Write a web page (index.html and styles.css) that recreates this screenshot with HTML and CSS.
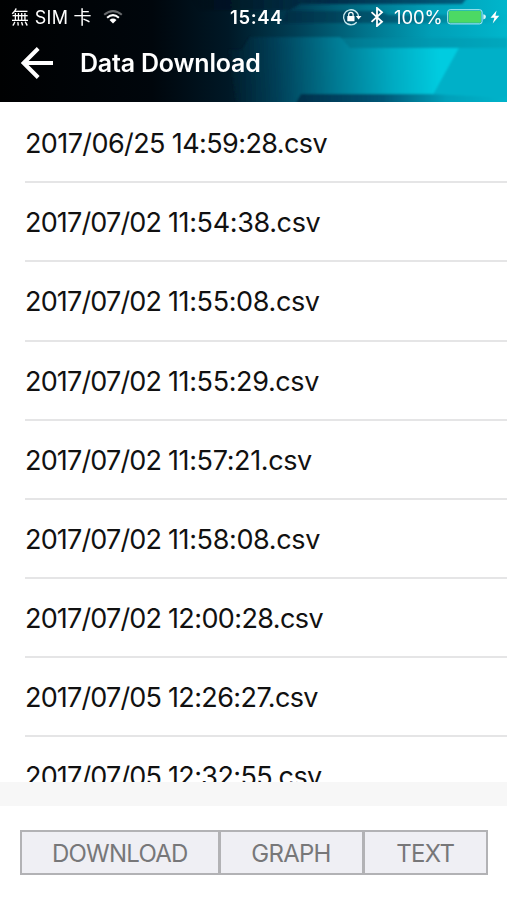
FILE: index.html
```
<!DOCTYPE html>
<html lang="en">
<head>
<meta charset="utf-8">
<title>Data Download</title>
<link rel="stylesheet" href="styles.css">
</head>
<body>
<div class="screen">
  <header class="header">
    <svg class="header-art" viewBox="0 0 507 102" preserveAspectRatio="none" aria-hidden="true">
      <defs>
        <linearGradient id="base"><stop offset="0" stop-color="#000102"/><stop offset=".3" stop-color="#00060c"/><stop offset=".45" stop-color="#001826"/><stop offset=".58" stop-color="#003e54"/><stop offset=".72" stop-color="#00738b"/><stop offset=".85" stop-color="#009fb7"/><stop offset="1" stop-color="#00b6cc"/></linearGradient>
        <linearGradient id="panel" gradientUnits="userSpaceOnUse" x1="205" y1="90" x2="440" y2="80"><stop offset="0" stop-color="#000b14"/><stop offset=".3" stop-color="#003e56"/><stop offset=".55" stop-color="#007891"/><stop offset=".8" stop-color="#00abc2"/><stop offset="1" stop-color="#00cce0"/></linearGradient>
        <linearGradient id="top"><stop offset="0" stop-color="#00080f" stop-opacity="0"/><stop offset=".5" stop-color="#002c48"/><stop offset="1" stop-color="#006080"/></linearGradient>
        <linearGradient id="band"><stop offset="0" stop-color="#00283f"/><stop offset=".5" stop-color="#00506b"/><stop offset="1" stop-color="#00879f" stop-opacity="0"/></linearGradient>
        <linearGradient id="foot"><stop offset="0" stop-color="#002e49"/><stop offset=".4" stop-color="#005575"/><stop offset=".7" stop-color="#00a0b9"/><stop offset="1" stop-color="#00b5cc"/></linearGradient>
        <filter id="soft" x="-5%" y="-10%" width="110%" height="120%"><feGaussianBlur stdDeviation=".8"/></filter>
      </defs>
      <rect width="507" height="102" fill="url(#base)"/>
      <g filter="url(#soft)">
        <path d="M190-3H468L462 4H300L290 10H200Z" fill="url(#top)"/>
        <path d="M286 11H380L388 15H507V23H282Z" fill="url(#band)" opacity=".75"/>
        <path d="M250 37H340L350 48H459L427 106H237L229 50H242Z" fill="url(#panel)"/>
        <path d="M340 38H507V48H350Z" fill="#0093ab" opacity=".4"/>
        <path d="M459 48H512V106H427Z" fill="#00b0c8"/>
        <path d="M301 94H430L512 98V106H294Z" fill="url(#foot)"/>
      </g>
    </svg>
    <div class="status">
      <div class="carrier">無 SIM 卡</div>
      <svg class="wifi" viewBox="0 0 20 16"><g fill="none" stroke="#fff" stroke-width="2.1"><path d="M1.2 5.8Q10-1.5 18.8 5.8" opacity=".4"/><path d="M4.1 8.7Q10 3.6 15.9 8.7"/></g><path d="M6.5 11Q10 8.2 13.5 11L10 14.6Z" fill="#fff"/></svg>
      <div class="clock">15:44</div>
      <svg class="lock" viewBox="0 0 20 18"><path d="M14.7 14.2A7.5 7.5 0 1 1 16.5 8.5" fill="none" stroke="#c5e8ee" stroke-width="1.3"/><path d="M13.8 7.9H19.5L16.6 11.6Z" fill="#fff"/><rect x="5.3" y="8" width="7.2" height="5.2" rx=".5" fill="#fff"/><path d="M6.7 8V6.6A2.2 2.2 0 0 1 11.1 6.6V8" fill="none" stroke="#fff" stroke-width="1.2"/></svg>
      <svg class="bluetooth" viewBox="0 0 14 20"><path d="M1.5 5.2 12 14.8 7 19V1L12 5.2 1.5 14.8" fill="none" stroke="#fff" stroke-width="1.8"/></svg>
      <div class="percent">100%</div>
      <svg class="battery" viewBox="0 0 40 16"><rect x=".7" y=".7" width="34.4" height="14.2" rx="2.5" fill="none" stroke="#b5eaf2" stroke-width="1"/><rect x="1.8" y="1.8" width="32.2" height="12" rx="1.2" fill="#4cd964"/><path d="M36.3 5.2Q39 5.5 39 7.8T36.3 10.4Z" fill="#d8f6fa"/></svg>
      <svg class="bolt" viewBox="0 0 10 14"><path d="M6.6.5.5 7.7H4.4L2.7 13.5 9.3 5.7H5.4Z" fill="#fff"/></svg>
    </div>
    <div class="titlebar">
      <svg class="back" viewBox="0 0 34 34"><path d="M32 17H3M17.2 2.5 2.7 17 17.2 31.5" fill="none" stroke="#fff" stroke-width="4"/></svg>
      <h1 class="title">Data Download</h1>
    </div>
  </header>
  <ul class="files">
    <li class="file">2017/06/25 14:59:28.csv</li>
    <li class="file"><span class="date">2017/07/02 </span><span class="loose">11:54:38.csv</span></li>
    <li class="file"><span class="date">2017/07/02 </span><span class="loose">11:55:08.csv</span></li>
    <li class="file"><span class="date">2017/07/02 </span><span class="loose">11:55:29.csv</span></li>
    <li class="file"><span class="date">2017/07/02 </span><span class="loose">11:57:21.csv</span></li>
    <li class="file"><span class="date">2017/07/02 </span><span class="loose">11:58:08.csv</span></li>
    <li class="file"><span class="date">2017/07/02 </span>12:00:28.csv</li>
    <li class="file"><span class="date">2017/07/05 </span>12:26:27.csv</li>
    <li class="file"><span class="date">2017/07/05 </span>12:32:55.csv</li>
  </ul>
  <div class="strip"></div>
  <footer class="actions">
    <button class="action download">DOWNLOAD</button>
    <button class="action graph">GRAPH</button>
    <button class="action text">TEXT</button>
  </footer>
</div>
</body>
</html>
```
FILE: styles.css
```
* { box-sizing: border-box; }
body { margin: 0; background: #fff; font-family: Inter, "Noto Sans CJK TC", sans-serif; }
.screen { width: 507px; height: 900px; display: flex; flex-direction: column; overflow: hidden; }
.header { height: 102px; flex: none; position: relative; isolation: isolate; color: #fff; }
.header-art { position: absolute; inset: 0; width: 100%; height: 100%; z-index: -1; }
.status { height: 34px; display: flex; align-items: center; font-size: 18.5px; line-height: 34px; white-space: nowrap; }
.carrier { width: 92px; margin-left: 11px; padding-top: 1px; font-size: 18px; letter-spacing: .3px; }
.wifi { width: 20px; height: 16px; }
.clock { width: 60px; margin-left: 107px; font-size: 18.5px; font-weight: 600; letter-spacing: .6px; }
.lock { width: 20px; height: 18px; margin-left: 52px; }
.bluetooth { width: 14px; height: 20px; margin-left: 8px; }
.percent { width: 50px; margin-left: 10px; letter-spacing: -.1px; }
.battery { width: 40px; height: 16px; margin-left: 3px; }
.bolt { width: 10px; height: 14px; margin-left: 3px; }
.status svg { flex: none; }
.titlebar { height: 58px; display: flex; align-items: center; }
.back { width: 34px; height: 34px; margin-left: 21px; }
.title { margin: 0 0 0 25px; font-size: 25px; font-weight: 600; line-height: 34px; letter-spacing: -.2px; }
.files { list-style: none; margin: 0; padding: 2.2px 0 0 25px; height: 680px; flex: none; overflow: hidden; }
.file { height: 79.15px; border-bottom: 2px solid #e5e5e6; color: #111; font-size: 27px; line-height: 79px; letter-spacing: -.6px; white-space: nowrap; }
.date { letter-spacing: -.83px; }
.loose { letter-spacing: -.37px; }
.strip { height: 24px; flex: none; background: #f7f7f7; }
.actions { display: flex; padding: 24px 19px 0 20px; }
.action { height: 45px; margin: 0; padding: 2px 0 0; border: 2px solid #b2b2b5; border-radius: 0; background: #efeff4; color: #777779; font: 24px/40px Inter, sans-serif; letter-spacing: -.75px; }
.download { width: 199.5px; }
.graph { width: 144px; border-left-width: 1px; }
.text { width: 124.5px; border-left-width: 1px; }
```
